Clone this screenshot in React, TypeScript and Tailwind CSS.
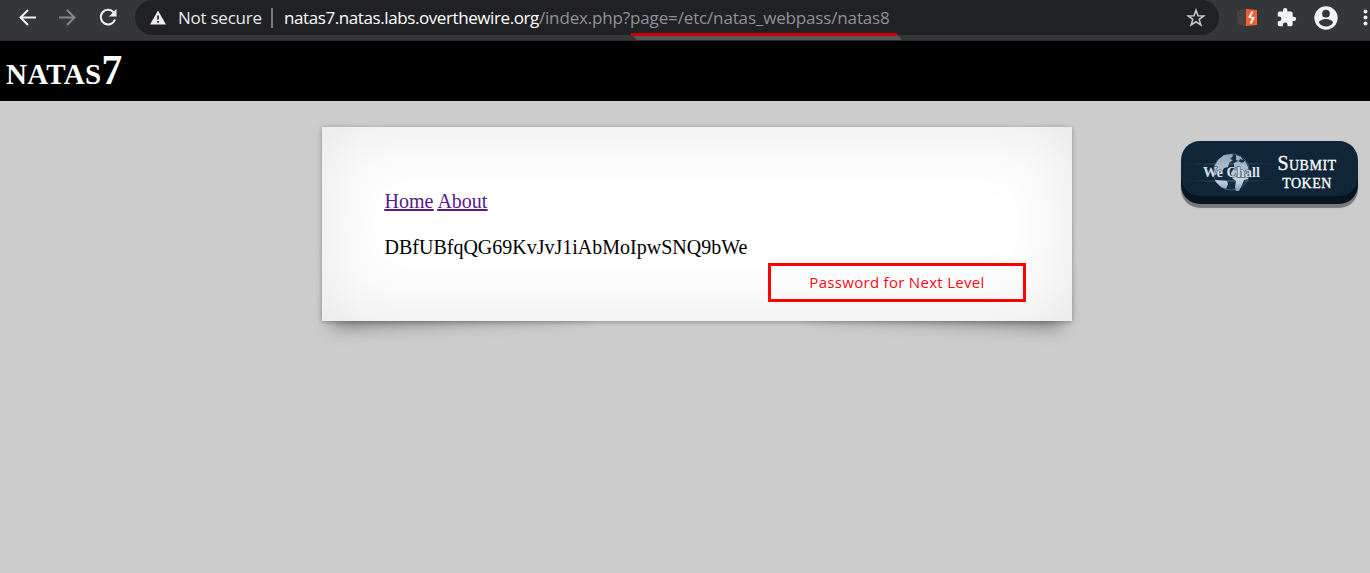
import React from 'react';

const Toolbar = () => (
  <header className="flex h-[41px] w-full shrink-0 items-start overflow-hidden border-b border-[#29292b] bg-[#35363a]">
    <div className="flex h-[35px] w-[135px] shrink-0 items-center pl-[18px]">
      <svg className="size-[20px]" viewBox="0 0 20 20" fill="none" stroke="#f1f1f2" strokeWidth="2">
        <path d="M18 9.500H3M10 2 2.500 9.500l7.500 7.500" />
      </svg>
      <svg className="ml-[20px] size-[20px]" viewBox="0 0 20 20" fill="none" stroke="#86878a" strokeWidth="2">
        <path d="M1 9.500h15M9 2l7.500 7.500L9 17" />
      </svg>
      <svg className="ml-[20px] size-[20px]" viewBox="0 0 20 20" fill="none">
        <path d="M15.600 4.300A7.300 7.300 0 1 0 17 11.500" stroke="#f1f1f2" strokeWidth="2.100" />
        <path d="M18.500 1V8.500H11Z" fill="#f1f1f2" />
      </svg>
    </div>
    <div className="flex h-[35px] w-[1084px] shrink-0 items-center rounded-full bg-[#202124] pl-[15px]">
      <svg className="mt-px size-[16px] shrink-0" viewBox="0 0 16 16">
        <path d="M8 .5 16 14.500H0Z" fill="#ececec" />
        <path d="M7.200 5.500h1.700v4H7.200ZM7.200 11h1.700v1.700H7.200Z" fill="#202124" />
      </svg>
      <span className="ml-[12px] w-[93px] shrink-0 font-['Open_Sans','Noto_Sans',sans-serif] text-[17px] leading-[24px] tracking-[-0.25px] whitespace-nowrap text-[#e8eaed]">Not secure</span>
      <span className="h-[20px] w-[2px] shrink-0 bg-[#77787b]" />
      <span className="ml-[11px] w-[901px] shrink-0 font-['Open_Sans','Noto_Sans',sans-serif] text-[17px] leading-[24px] tracking-[-0.15px] whitespace-nowrap text-[#919295]">
        <span className="tracking-[-0.41px] text-white">natas7.natas.labs.overthewire.org</span>/index.php?page=/etc/natas_webpass/natas8
      </span>
      <svg className="ml-[1px] size-[20px] shrink-0" viewBox="0 0 20 20">
        <path d="m10 2.200 2 5.500 5.800.2-4.600 3.500 1.600 5.600-4.800-3.200-4.800 3.200 1.600-5.600-4.600-3.500 5.800-.2Z" fill="none" stroke="#c4c5c7" strokeWidth="1.600" />
      </svg>
    </div>
    <div className="flex h-[35px] shrink-0 items-center pl-[18px]">
      <svg className="h-[20px] w-[20px]" viewBox="0 0 20 20">
        <path d="m0 3 9-2v17l-9-2Z" fill="#49433f" />
        <path d="m9 1 11 1v15L9 18Z" fill="#f16334" />
        <path d="m15.500 3.500-3 5.500 4 1-3 5.500" fill="none" stroke="white" strokeWidth="1.800" />
      </svg>
      <svg className="ml-[19px] size-[21px]" viewBox="0 0 24 24" fill="#f1f3f4">
        <path d="M20.500 11H19V7c0-1.100-.9-2-2-2h-4V3.500a2.500 2.500 0 0 0-5 0V5H4c-1.100 0-2 .9-2 2v3.800h1.500a2.700 2.700 0 0 1 0 5.400H2V20c0 1.100.9 2 2 2h3.800v-1.500a2.700 2.700 0 0 1 5.400 0V22H17c1.100 0 2-.9 2-2v-4h1.500a2.500 2.500 0 0 0 0-5Z" />
      </svg>
      <svg className="ml-[15px] size-[28px]" viewBox="0 0 24 24" fill="#f1f3f4">
        <path d="M12 2a10 10 0 1 0 0 20 10 10 0 0 0 0-20Zm0 3a3.300 3.300 0 1 1 0 6.600A3.300 3.300 0 0 1 12 5Zm0 14.200A7.200 7.200 0 0 1 6 16c.1-2 4-3.100 6-3.100s5.900 1.100 6 3.100a7.200 7.200 0 0 1-6 3.200Z" />
      </svg>
      <svg className="ml-[23px] h-[20px] w-[5px]" viewBox="0 0 5 20" fill="#f1f3f4">
        <circle cx="2.500" cy="3.500" r="2" /><circle cx="2.500" cy="9.500" r="2" /><circle cx="2.500" cy="15.500" r="2" />
      </svg>
    </div>
  </header>
);

const Globe = () => (
  <svg className="mt-[7px] h-[38px] w-[94px] shrink-0" viewBox="0 0 94 38">
    <defs>
      <linearGradient id="beam"><stop offset="0" stopColor="#45708f" stopOpacity="0" /><stop offset=".5" stopColor="#a5c5dc" /><stop offset="1" stopColor="#45708f" stopOpacity="0" /></linearGradient>
      <linearGradient id="land" x2="0" y2="1"><stop stopColor="#8fa2b8" /><stop offset=".7" stopColor="#c9d7e6" /><stop offset="1" stopColor="#7b91aa" /></linearGradient>
    </defs>
    <circle cx="50.500" cy="19" r="18" fill="#152d43" stroke="#4d657d" strokeWidth=".8" />
    <path d="m33 14 4-7 6-5 8-1 1 2-3 3 3 1-4 3-1 4-4 1-2 4-4 1-4 3ZM34 27l7 .5 5 .5 1 3-2 5-5-2-5-5ZM55 2l5 2 2 3-3-1-1 2-3-1ZM53 10l4-2 4 2 3-2 3 6 1 6-1 6-4 1-2 5-3 6-3 1-1-5 1-6-4-3-1-5 3-5Z" fill="url(#land)" />
    <path d="M3 10.500h91v1H3ZM3 27.500h91v1H3Z" fill="url(#beam)" opacity=".45" />
    <text x="22" y="24" textLength="57" lengthAdjust="spacingAndGlyphs" fontFamily="'Liberation Serif',serif" fontSize="14" fontWeight="700" fill="#d3dce8" stroke="#20384e" strokeWidth="1" paintOrder="stroke">We Chall</text>
  </svg>
);

export default function App() {
  return (
    <div className="relative flex h-[573px] w-[1370px] flex-col overflow-hidden bg-[#cccccc] font-['Liberation_Serif',serif]">
      <Toolbar />
      <svg className="absolute top-[32px] left-[631px] h-[9px] w-[270px]" viewBox="0 0 270 9">
        <path d="M1 3h266l4 5H6Z" fill="#565759" />
        <path d="M0 1h266v3H0Z" fill="#cc0000" />
      </svg>
      <h1 className="h-[60px] shrink-0 bg-black pl-[6px] text-[41.500px] leading-[59px] font-bold tracking-[0.3px] text-white [font-variant-caps:small-caps]">natas7</h1>
      <main className="flex items-start pt-[26px] pl-[322px]">
        <section className="relative isolate h-[194px] w-[750px] shrink-0">
          <div className="absolute bottom-[13px] left-[16px] -z-10 h-[107px] w-[250px] -rotate-3 -skew-x-[8deg] shadow-[0_12px_18px_rgba(0,0,0,0.4)]" />
          <div className="absolute right-[16px] bottom-[13px] -z-10 h-[107px] w-[250px] rotate-3 skew-x-[8deg] shadow-[0_12px_18px_rgba(0,0,0,0.4)]" />
          <div className="flex h-full flex-col bg-white px-[62.500px] pt-[63px] text-[20px] leading-[23px] text-black shadow-[0_1px_5px_rgba(0,0,0,0.3),inset_0_0_75px_rgba(0,0,0,0.1)]">
            <nav className="flex gap-[4px] text-[#551a8b] underline decoration-[1.500px]">
              <a href="#">Home</a><a href="#">About</a>
            </nav>
            <p className="mt-[23px] whitespace-nowrap">DBfUBfqQG69KvJvJ1iAbMoIpwSNQ9bWe</p>
          </div>
          <div className="absolute top-[136px] left-[446px] flex h-[39px] w-[258px] items-center justify-center border-[3px] border-[#ff0000] pb-[2px] font-['Open_Sans','Noto_Sans',sans-serif] text-[15px] leading-[20px] tracking-[0.3px] whitespace-nowrap text-[#f40b17]">Password for Next Level</div>
        </section>
        <button className="mt-[14px] ml-[109px] flex h-[55px] w-[177px] shrink-0 items-center rounded-[19px] bg-[#102638] shadow-[0_8px_0_#081521,0_12px_1px_#777777]">
          <Globe />
          <span className="flex w-[64px] flex-col items-center pt-[7px] text-[20px] leading-[18px] tracking-[0.5px] text-white [font-variant-caps:small-caps] [-webkit-text-stroke:0.300px_white]"><span>Submit</span><span>token</span></span>
        </button>
      </main>
    </div>
  );
}
